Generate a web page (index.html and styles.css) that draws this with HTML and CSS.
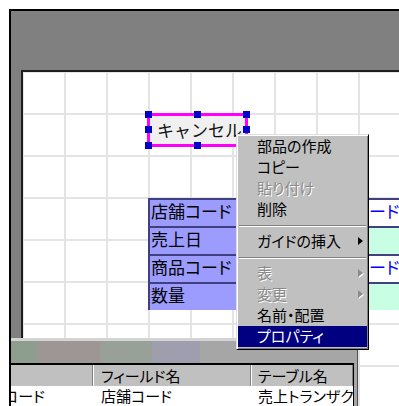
FILE: index.html
```html
<!DOCTYPE html>
<html lang="ja">

<head>
    <meta charset="UTF-8">
    <meta name="viewport" content="width=device-width, initial-scale=1.0">
    <title>フォーム デザイン</title>

    <link rel="stylesheet" href="styles.css">
</head>

<body>
    <div class="frame">
        <div class="header-band"></div>
        <div class="workspace">
            <div class="part-button">
                <div class="button-face">キャンセル</div>
                <span class="handle" style="left:-5px;top:-5px"></span>
                <span class="handle" style="left:44px;top:-5px"></span>
                <span class="handle" style="left:93px;top:-5px"></span>
                <span class="handle" style="left:-5px;top:10px"></span>
                <span class="handle" style="left:93px;top:10px"></span>
                <span class="handle" style="left:-5px;top:26px"></span>
                <span class="handle" style="left:44px;top:26px"></span>
                <span class="handle" style="left:93px;top:26px"></span>
            </div>

            <div class="field-list fields-sales">
                <div class="field">店舗コード</div>
                <div class="field">売上日</div>
                <div class="field">商品コード</div>
                <div class="field">数量</div>
            </div>

            <div class="field-list fields-master">
                <div class="field key">店舗コード</div>
                <div class="field alt"></div>
                <div class="field key">商品コード</div>
                <div class="field alt"></div>
            </div>
        </div>

        <div class="panel">
            <div class="panel-strip">
                <span class="swatch s1"></span>
                <span class="swatch s2"></span>
                <span class="swatch s3"></span>
                <span class="swatch s4"></span>
                <span class="swatch s5"></span>
            </div>
            <div class="field-table">
                <div class="row head">
                    <div class="cell c1"></div>
                    <div class="cell c2">フィールド名</div>
                    <div class="cell c3">テーブル名</div>
                </div>
                <div class="row">
                    <div class="cell c1"><span class="scrolled">コード</span></div>
                    <div class="cell c2">店舗コード</div>
                    <div class="cell c3">売上トランザクション</div>
                </div>
            </div>
        </div>
    </div>

    <ul class="menu">
        <li class="item">部品の作成</li>
        <li class="item">コピー</li>
        <li class="item disabled">貼り付け</li>
        <li class="item">削除</li>
        <li class="sep"></li>
        <li class="item sub">ガイドの挿入</li>
        <li class="sep"></li>
        <li class="item sub disabled">表</li>
        <li class="item sub disabled">変更</li>
        <li class="item">名前・配置</li>
        <li class="item active">プロパティ</li>
    </ul>
</body>

</html>
```

FILE: styles.css
```css
html,
body {
    margin: 0;
    overflow: hidden;
    background: #fff;
}

body {
    font-family: "Noto Sans CJK JP", "Noto Sans", sans-serif;
    position: relative;
    height: 406px;
}

.frame {
    margin: 9px 0 0 9px;
    height: 395px;
    border-top: 2px solid #000;
    border-left: 2px solid #000;
    background: #808080;
    display: flex;
    flex-direction: column;
    position: relative;
    overflow: hidden;
}

.header-band {
    height: 59px;
    flex: none;
}

.workspace {
    flex: 1;
    margin-left: 10px;
    border-top: 2px solid #1e1e1e;
    border-left: 2px solid #1e1e1e;
    position: relative;
    background-color: #fff;
    background-image:
        linear-gradient(to right, transparent 40px, #e4e4e4 40px, #e4e4e4 42px),
        linear-gradient(to bottom, transparent 40px, #e4e4e4 40px, #e4e4e4 42px);
    background-size: 42px 42px;
    background-position: 1px 1px;
}

/* parts on the layout canvas */
.part-button {
    position: absolute;
    left: 124px;
    top: 41px;
    width: 101px;
    height: 34px;
    box-sizing: border-box;
    border: 3px solid #ff00ff;
    background: #f0f0f0;
}

.button-face {
    height: 100%;
    display: flex;
    align-items: center;
    padding-left: 7px;
    padding-bottom: 1px;
    box-sizing: border-box;
    font-size: 17px;
    color: #111;
    white-space: nowrap;
}

.handle {
    position: absolute;
    width: 7px;
    height: 7px;
    background: #0000c8;
}

.field-list {
    position: absolute;
    top: 126px;
    font-size: 17px;
    font-feature-settings: "palt";
    white-space: nowrap;
}

.fields-sales {
    left: 125px;
    width: 170px;
    border-left: 2px solid #404080;
}

.fields-master {
    left: 289px;
    width: 200px;
}

.field {
    height: 26px;
    line-height: 22px;
    border-top: 2px solid #404080;
    background: #9c9cff;
    color: #000;
    padding-left: 1px;
    overflow: hidden;
}

.fields-master .field {
    padding-left: 7px;
    color: #0000ff;
}

.fields-master .key {
    background: #fff;
}

.fields-master .alt {
    background: #c8ffe4;
}

/* docked field window */
.panel {
    position: absolute;
    left: 0;
    top: 327px;
    width: 347px;
    height: 68px;
    box-sizing: border-box;
    background: #a6a6a6;
    border-top: 3px solid #d4d4d4;
    border-right: 1px solid #505050;
    padding-right: 3px;
}

.panel-strip {
    height: 22px;
    display: flex;
}

.swatch {
    display: block;
}

.s1 { width: 27px; background: #8e9d8e; }
.s2 { width: 62px; background: #9e9595; }
.s3 { width: 52px; background: #97a197; }
.s4 { width: 48px; background: #9e9eae; }
.s5 { flex: 1; background: #a6a6a6; }

.field-table {
    border-top: 2px solid #000;
    border-right: 1px solid #000;
    font-size: 15px;
    font-feature-settings: "palt";
}

.row {
    display: flex;
    height: 20px;
    line-height: 20px;
    background: #fff;
    color: #000;
}

.row.head {
    height: 21px;
    line-height: 21px;
    background: #c0c0c0;
}

.cell {
    overflow: hidden;
    white-space: nowrap;
    box-sizing: border-box;
}

.c1 { width: 82px; }
.c2 { width: 158px; padding-left: 8px; }
.c3 { flex: 1; padding-left: 7px; }

.head .cell {
    border-right: 1px solid #808080;
}

.head .cell + .cell {
    box-shadow: inset 1px 0 0 #fff;
}

.scrolled {
    margin-left: -7px;
}

/* context menu */
.menu {
    position: absolute;
    left: 236px;
    top: 134px;
    width: 133px;
    margin: 0;
    padding: 1px 1px 2px;
    list-style: none;
    box-sizing: border-box;
    background: #c0c0c0;
    border: 1px solid;
    border-color: #dfdfdf #000 #000 #dfdfdf;
    box-shadow: inset 1px 1px 0 #fff, inset -1px -1px 0 #808080;
    font-size: 15px;
    font-feature-settings: "palt";
    color: #000;
}

.item {
    position: relative;
    height: 21px;
    line-height: 20px;
    padding-left: 19px;
    white-space: nowrap;
}

.item.disabled {
    color: #8a8a8a;
    text-shadow: 1px 1px 0 #fff;
}

.item.active {
    background: #000080;
    color: #fff;
}

.sub::after {
    content: "";
    position: absolute;
    right: 4px;
    top: 6px;
    border-left: 5px solid #000;
    border-top: 4px solid transparent;
    border-bottom: 4px solid transparent;
}

.sub.disabled::after {
    border-left-color: #8a8a8a;
    filter: drop-shadow(1px 1px 0 #fff);
}

.sep {
    height: 11px;
    position: relative;
}

.sep::before {
    content: "";
    position: absolute;
    left: 1px;
    right: 1px;
    top: 5px;
    border-top: 1px solid #808080;
    border-bottom: 1px solid #fff;
}
```
